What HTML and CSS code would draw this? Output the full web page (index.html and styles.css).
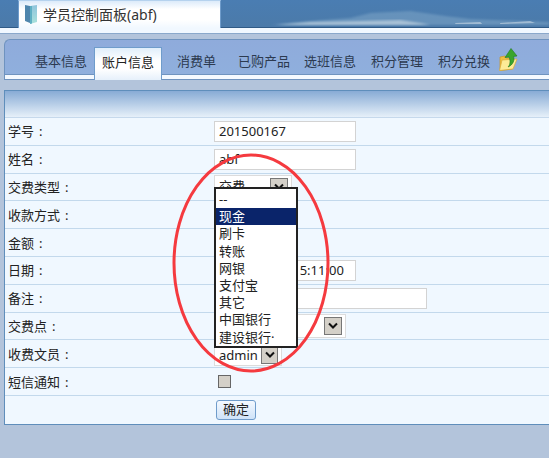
FILE: index.html
```html
<!DOCTYPE html>
<html lang="zh-CN">
<head>
<meta charset="utf-8">
<title>学员控制面板</title>
<link rel="stylesheet" href="styles.css">
</head>
<body>
<header class="topbar">
  <div class="title-tab">
    <svg class="book" width="13" height="19" viewBox="0 0 13 19"><defs><linearGradient id="bk" x1="0" y1="0" x2="0" y2="1"><stop offset="0" stop-color="#8fc4dc"/><stop offset="1" stop-color="#a9e2dc"/></linearGradient></defs><path d="M0 0 L5 1 L5 18 L0 16 Z" fill="#4f86ad"/><path d="M5 1 L12 0 L12 17 L5 19 Z" fill="url(#bk)"/><path d="M5 1 L7 1 L7 18.5 L5 19 Z" fill="#5fb0c4"/></svg>
    <span>学员控制面板(abf)</span>
  </div>
  <svg class="clouds" viewBox="0 0 329 27" preserveAspectRatio="none"><defs><filter id="b"><feGaussianBlur stdDeviation="1"/></filter></defs><path d="M50 25 L90 21 L130 18 L150 13 L190 11 L225 16 L250 19 L329 22 L329 25 Z" fill="#7ea6c8" opacity=".55" filter="url(#b)"/><path d="M55 25 L90 22 L140 21 L180 20 L200 23 L210 25 Z" fill="#c9d9e4" opacity=".65" filter="url(#b)"/><path d="M235 23 L260 22 L262 24 L235 24 Z M280 23 L310 21 L315 23 L280 24 Z" fill="#c9d9e4" opacity=".6"/></svg>
</header>
<div class="band"></div>
<nav class="tabs">
  <a class="tab t1">基本信息</a>
  <a class="tab active">账户信息</a>
  <a class="tab t3">消费单</a>
  <a class="tab t4">已购产品</a>
  <a class="tab t5">选班信息</a>
  <a class="tab t5">积分管理</a>
  <a class="tab t5">积分兑换</a>
  <svg class="folder" width="19" height="23" viewBox="0 0 19 23"><path d="M1 9 L6 8 L7 10 L13 10 L13 21 L1 22.5 Z" fill="#f0bf3f" stroke="#c9962a" stroke-width=".7"/><path d="M0.5 22.5 L3 12 L18 11 L14 21 Z" fill="#fdeb96" stroke="#d8a93a" stroke-width=".7"/><path d="M9 19 C12 16 11 11 10 9 L6 9.500 L12 0.500 L18 8 L14.500 8.500 C16 12 14 17 9 19 Z" fill="#3aa52c" stroke="#1f7a1c" stroke-width=".6"/></svg>
</nav>
<main class="panel">
  <div class="panel-head"></div>
  <div class="row"><label>学号<b class="colon">:</b></label><input class="inp w142" value="201500167"></div>
  <div class="row"><label>姓名<b class="colon">:</b></label><input class="inp w142" value="abf"></div>
  <div class="row"><label>交费类型<b class="colon">:</b></label><div class="sel w78"><span>交费</span><i class="arrow"><svg width="12" height="8" viewBox="0 0 12 8"><path d="M2 1.500 L6 5.500 L10 1.500" fill="none" stroke="#111" stroke-width="2"/></svg></i></div></div>
  <div class="row"><label>收款方式<b class="colon">:</b></label></div>
  <div class="row"><label>金额<b class="colon">:</b></label></div>
  <div class="row"><label>日期<b class="colon">:</b></label><input class="inp w142 date" value="2015-01-20 15:11:00"></div>
  <div class="row"><label>备注<b class="colon">:</b></label><input class="inp w213"></div>
  <div class="row"><label>交费点<b class="colon">:</b></label><div class="sel w132"><span></span><i class="arrow"><svg width="12" height="8" viewBox="0 0 12 8"><path d="M2 1.500 L6 5.500 L10 1.500" fill="none" stroke="#111" stroke-width="2"/></svg></i></div></div>
  <div class="row"><label>收费文员<b class="colon">:</b></label><div class="sel w68"><span>admin</span><i class="arrow"><svg width="12" height="8" viewBox="0 0 12 8"><path d="M2 1.500 L6 5.500 L10 1.500" fill="none" stroke="#111" stroke-width="2"/></svg></i></div></div>
  <div class="row"><label>短信通知<b class="colon">:</b></label><input class="check" type="checkbox"></div>
  <div class="row last"><label></label><button class="ok">确定</button></div>
</main>
<ul class="dropdown">
  <li>--</li>
  <li class="on">现金</li>
  <li>刷卡</li>
  <li>转账</li>
  <li>网银</li>
  <li>支付宝</li>
  <li>其它</li>
  <li>中国银行</li>
  <li>建设银行·</li>
</ul>
<svg class="ring" width="170" height="230" viewBox="0 0 170 230"><ellipse cx="85" cy="115" rx="77" ry="108" fill="none" stroke="#f53a3f" stroke-width="3"/></svg>
</body>
</html>
```
FILE: styles.css
```css
* { box-sizing: border-box; }
html, body { margin: 0; padding: 0; }
body {
  width: 549px;
  height: 458px;
  overflow: hidden;
  position: relative;
  background: #b3c4db;
  font: 13px/17px "Noto Sans", "Noto Sans CJK SC", sans-serif;
  color: #222;
}
.topbar {
  height: 28px;
  display: flex;
  padding-left: 18px;
  background: linear-gradient(#4a7db2, #4b7aa9);
  border-bottom: 1px solid #2f5a86;
}
.title-tab {
  width: 203px;
  height: 28px;
  display: flex;
  align-items: center;
  gap: 5px;
  padding: 0 0 1px 6px;
  background: linear-gradient(#dcebfa, #fff 30%, #fff 70%, #f1f8ff);
  border: 1px solid #6f9ccb;
  border-top-color: #b5d2ee;
  border-bottom: 0;
  font-size: 14px;
  color: #333;
}
.clouds { flex: 1; height: 27px; }
.band {
  height: 11px;
  background: linear-gradient(#f1f8ff 0, #f1f8ff 5px, #8aa8cb 5px, #8aa8cb 6px, #b3c4db 6px);
}
.tabs {
  height: 41px;
  margin-left: 4px;
  padding: 7px 0 0 30px;
  display: flex;
  align-items: flex-start;
  background: linear-gradient(#8fabdb 0, #8fafdd 34px, #6f93bf 34px, #6f93bf 35px, #f4f9ff 35px, #f4f9ff 100%);
  border: 1px solid #6f93bf;
  border-right: 0;
  border-top-left-radius: 6px;
}
.tab { height: 33px; line-height: 28px; color: #2c3a50; white-space: nowrap; }
.t1 { margin-right: 7px; }
.active {
  padding: 0 7px;
  margin-right: 15px;
  width: 68px;
  color: #222;
  background: linear-gradient(#e0eefb, #fff 40%, #fff 65%, #e6f0fb);
  border: 1px solid #6f9ccb;
  border-bottom: 0;
}
.t3 { margin-right: 22px; }
.t4 { margin-right: 14px; }
.t5 { margin-right: 15px; }
.folder { margin: 1px 0 0 -6px; }
.panel {
  margin: 10px 0 0 4px;
  height: 335px;
  background: #f0f8ff;
  border: 1px solid #5f8ebb;
  border-right: 0;
}
.panel-head {
  height: 27px;
  background: linear-gradient(#88abd5, #e6f0f9);
  border-bottom: 1px solid #c6d9ec;
}
.row {
  height: 27.8px;
  display: flex;
  align-items: center;
  padding-left: 3px;
  border-bottom: 1px solid #c3d9ec;
}
.row.last { border-bottom: 0; }
.row label { width: 206px; flex: none; padding-top: 1px; }
.colon { margin-left: 5px; font-weight: 400; }
.inp {
  height: 21px;
  padding: 0 4px;
  background: #fff;
  border: 1px solid #d3d3d3;
  font: inherit;
  color: #222;
}
.date { padding-left: 6px; padding-right: 0; }
.w142 { width: 142px; }
.w213 { width: 213px; }
.sel {
  height: 24px;
  display: flex;
  align-items: center;
  justify-content: space-between;
  padding: 0 3px 0 4px;
  background: #fff;
  border: 1px solid #dcdcdc;
}
.w78 { width: 78px; }
.w132 { width: 132px; }
.w68 { width: 68px; padding: 3px 3px 0 4px; }
.arrow {
  width: 18px;
  height: 18px;
  display: flex;
  align-items: center;
  justify-content: center;
  background: #d4d0c8;
  border: 1px solid #777;
}
.w68 .arrow { width: 17px; height: 17px; }
.check {
  appearance: none;
  width: 13px;
  height: 13px;
  margin: 0 0 0 4px;
  background: #d4d0c8;
  border: 1px solid #666;
}
.ok {
  width: 40px;
  height: 20px;
  margin-left: 2px;
  padding: 0;
  font: inherit;
  color: #222;
  background: linear-gradient(#f4f9ff, #cfe3f8);
  border: 1px solid #6f9ccb;
  border-radius: 3px;
}
.dropdown {
  position: absolute;
  left: 214px;
  top: 187px;
  width: 84px;
  height: 161px;
  margin: 0;
  padding: 2px 0 0;
  list-style: none;
  background: #fff;
  border: 2px solid #222;
}
.dropdown li { height: 17.2px; line-height: 17px; padding-left: 3px; }
.dropdown .on { background: #0a246a; color: #fff; }
.ring { position: absolute; left: 166px; top: 148px; }
```
